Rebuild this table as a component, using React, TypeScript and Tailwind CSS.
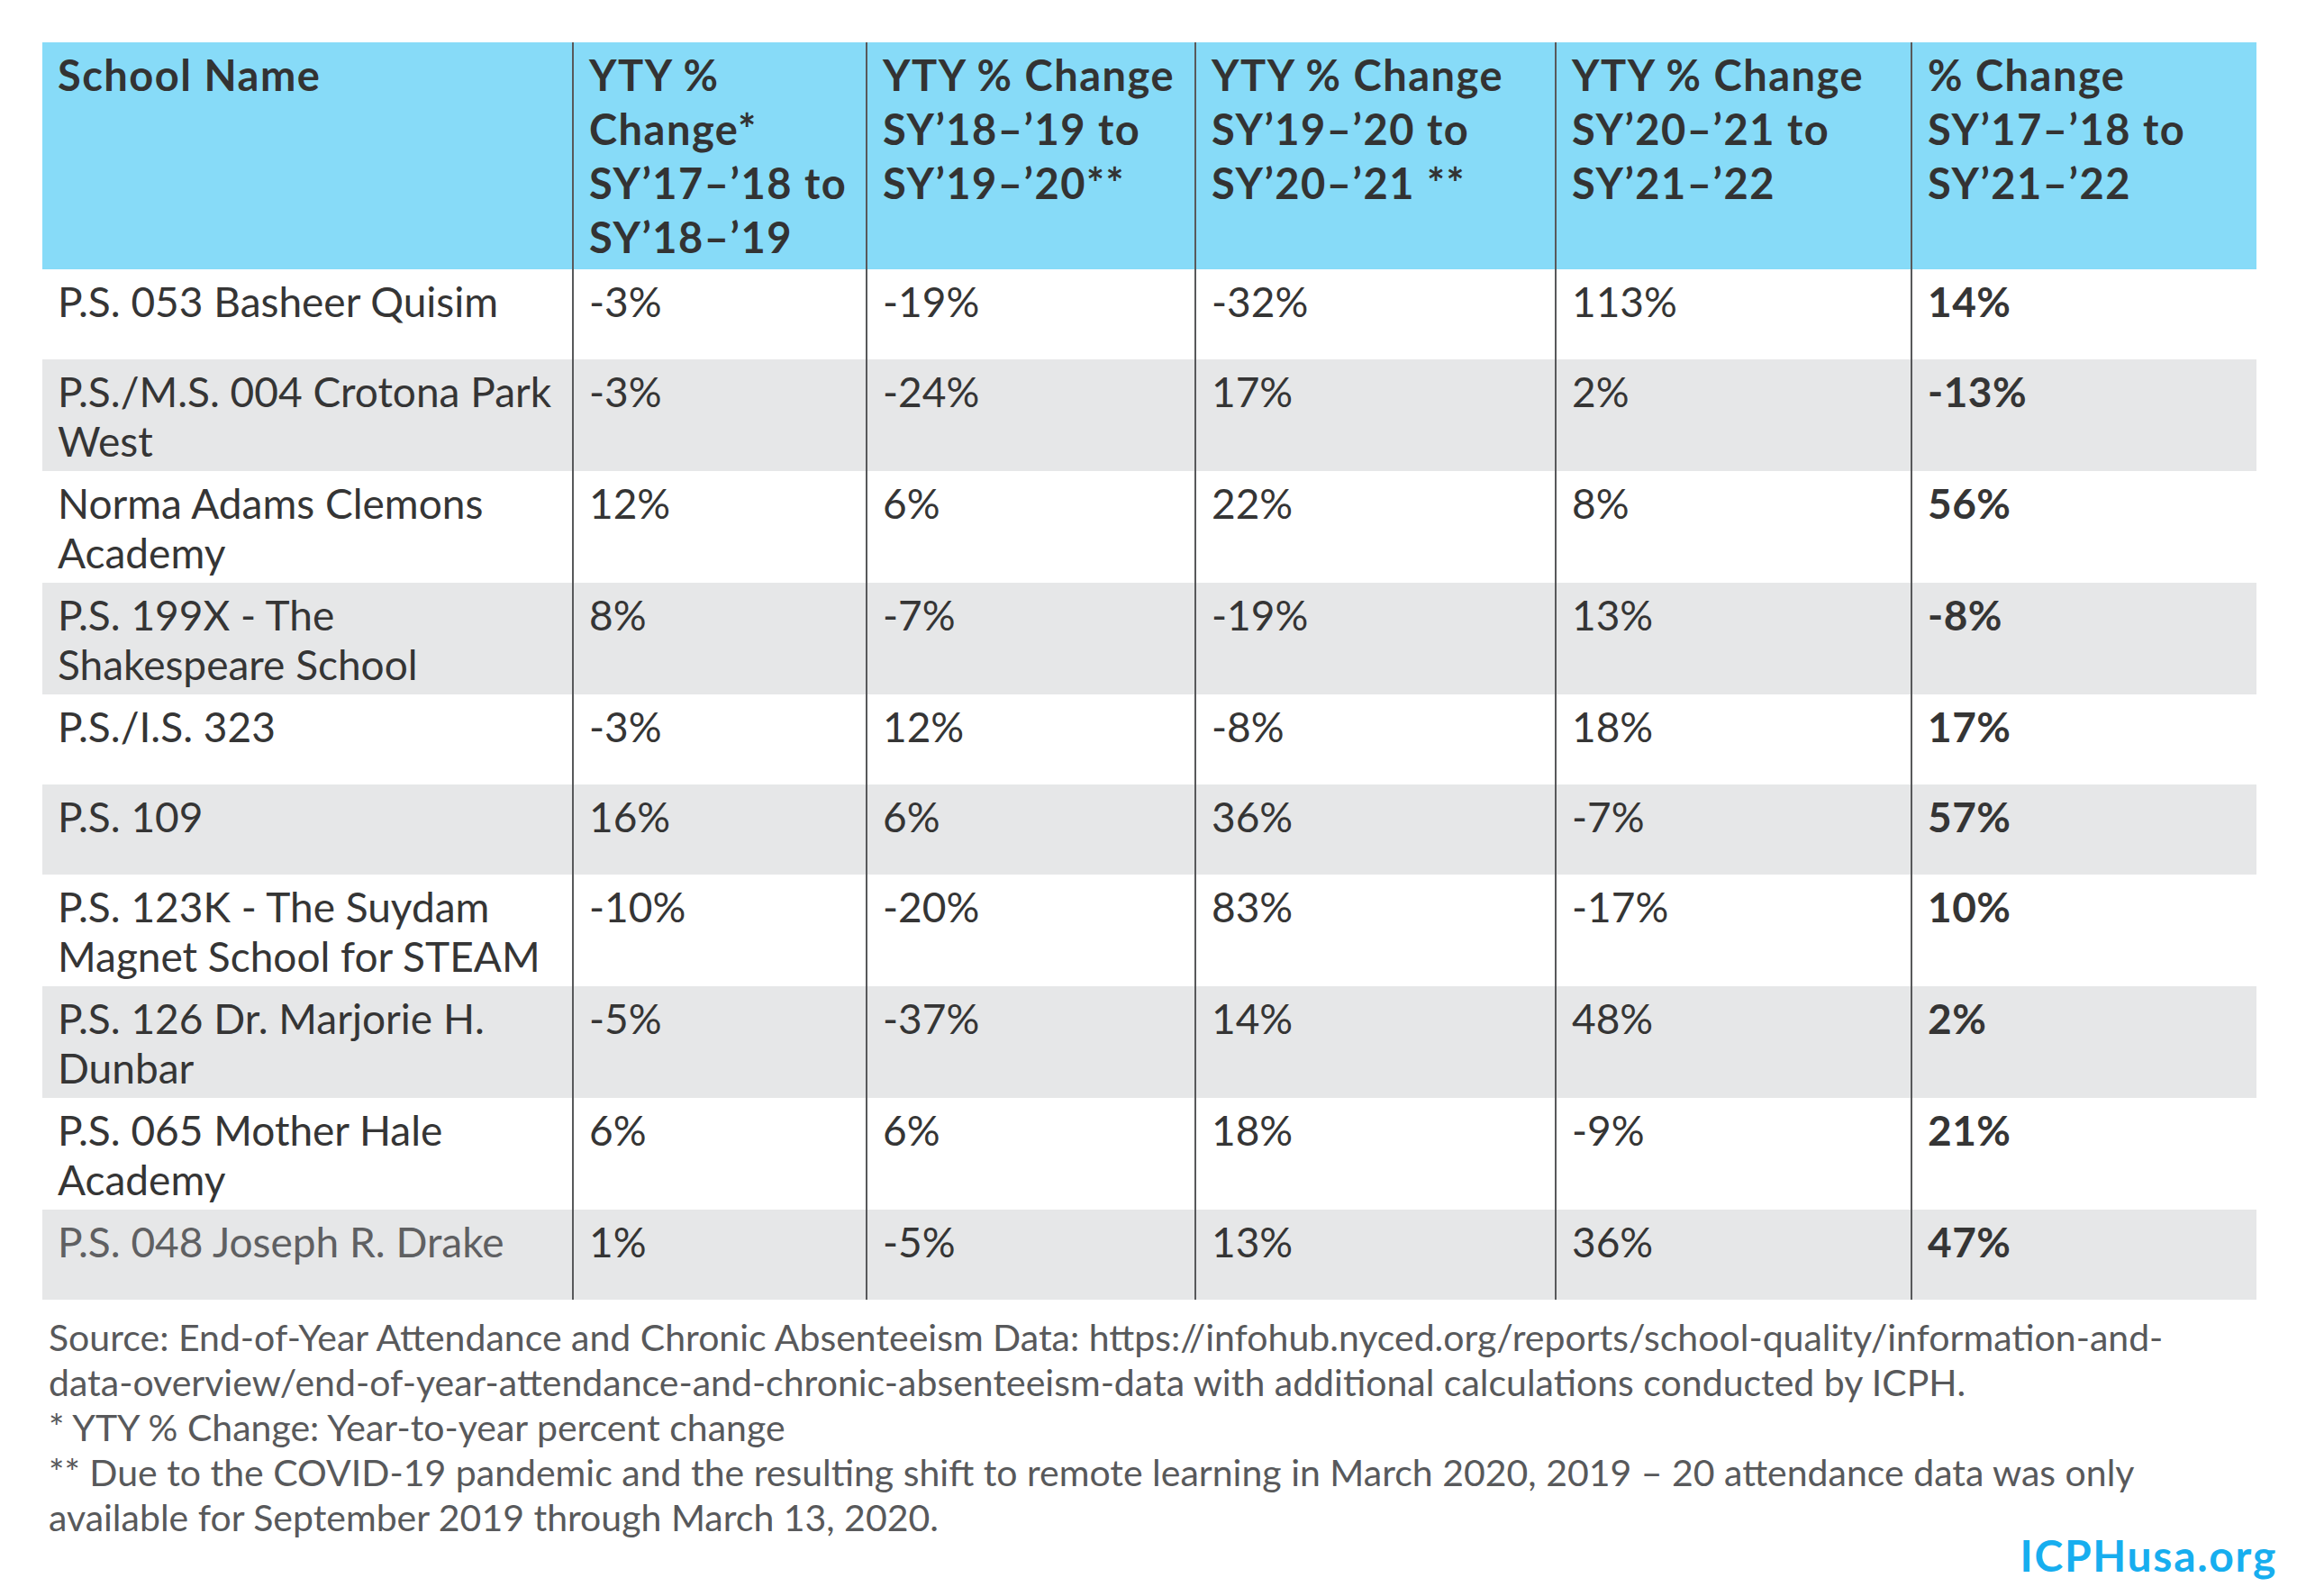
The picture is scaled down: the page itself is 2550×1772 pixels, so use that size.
const headers: string[][] = [
  ['School Name'],
  ['YTY %', 'Change*', 'SY’17–’18 to', 'SY’18–’19'],
  ['YTY % Change', 'SY’18–’19 to', 'SY’19–’20**'],
  ['YTY % Change', 'SY’19–’20 to', 'SY’20–’21 **'],
  ['YTY % Change', 'SY’20–’21 to', 'SY’21–’22'],
  ['% Change', 'SY’17–’18 to', 'SY’21–’22'],
];

type Row = { name: string[]; values: string[]; total: string };

const rows: Row[] = [
  { name: ['P.S. 053 Basheer Quisim'], values: ['-3%', '-19%', '-32%', '113%'], total: '14%' },
  { name: ['P.S./M.S. 004 Crotona Park', 'West'], values: ['-3%', '-24%', '17%', '2%'], total: '-13%' },
  { name: ['Norma Adams Clemons', 'Academy'], values: ['12%', '6%', '22%', '8%'], total: '56%' },
  { name: ['P.S. 199X - The', 'Shakespeare School'], values: ['8%', '-7%', '-19%', '13%'], total: '-8%' },
  { name: ['P.S./I.S. 323'], values: ['-3%', '12%', '-8%', '18%'], total: '17%' },
  { name: ['P.S. 109'], values: ['16%', '6%', '36%', '-7%'], total: '57%' },
  { name: ['P.S. 123K - The Suydam', 'Magnet School for STEAM'], values: ['-10%', '-20%', '83%', '-17%'], total: '10%' },
  { name: ['P.S. 126 Dr. Marjorie H.', 'Dunbar'], values: ['-5%', '-37%', '14%', '48%'], total: '2%' },
  { name: ['P.S. 065 Mother Hale', 'Academy'], values: ['6%', '6%', '18%', '-9%'], total: '21%' },
  { name: ['P.S. 048 Joseph R. Drake'], values: ['1%', '-5%', '13%', '36%'], total: '47%' },
];

const footnotes = [
  'Source: End-of-Year Attendance and Chronic Absenteeism Data: https://infohub.nyced.org/reports/school-quality/information-and-',
  'data-overview/end-of-year-attendance-and-chronic-absenteeism-data with additional calculations conducted by ICPH.',
  '* YTY % Change: Year-to-year percent change',
  '** Due to the COVID-19 pandemic and the resulting shift to remote learning in March 2020, 2019 – 20 attendance data was only',
  'available for September 2019 through March 13, 2020.',
];

function Lines({ lines }: { lines: string[] }) {
  return (
    <>
      {lines.map((l, i) => (
        <span key={i} className="block whitespace-nowrap">
          {l}
        </span>
      ))}
    </>
  );
}

export default function App() {
  return (
    <div
      className="w-[2550px] h-[1772px] bg-white pt-[47px] pl-[47px] pr-[22px] text-[#353535]"
      style={{ fontFamily: 'Lato, "Open Sans", sans-serif' }}
    >
      <div className="w-[2458px] grid grid-cols-[588px_326px_365px_400px_395px_384px]">
        {headers.map((h, i) => (
          <div
            key={i}
            className={`h-[252px] bg-[#87dbf8] pt-[6px] pl-[17px] text-[47px] leading-[60px] tracking-[1.5px] font-bold text-[#333] ${
              i > 0 ? 'border-l-2 border-[#58595b]' : ''
            }`}
          >
            <Lines lines={h} />
          </div>
        ))}
        {rows.map((r, ri) => {
          const bg = ri % 2 === 1 ? 'bg-[#e6e7e8]' : 'bg-white';
          const cell = `${bg} min-h-[100px] pt-[8px] pb-[6px] pl-[17px] text-[46px] leading-[55px] border-l-2 border-[#58595b]`;
          return (
            <div key={ri} className="contents">
              <div
                className={`${bg} min-h-[100px] pt-[8px] pb-[6px] pl-[17px] text-[46px] leading-[55px] ${
                  ri === rows.length - 1 ? 'text-[#5f6062]' : ''
                }`}
              >
                <Lines lines={r.name} />
              </div>
              {r.values.map((v, vi) => (
                <div key={vi} className={cell}>
                  {v}
                </div>
              ))}
              <div className={`${cell} font-bold tracking-[0.5px]`}>{r.total}</div>
            </div>
          );
        })}
      </div>
      <div className="mt-[17px] pl-[7px] text-[41px] leading-[50px] text-[#58595b]">
        <Lines lines={footnotes} />
      </div>
      <div className="-mt-[8px] text-right text-[48px] leading-[50px] tracking-[1.7px] font-bold text-[#17aeef]">
        ICPHusa.org
      </div>
    </div>
  );
}
